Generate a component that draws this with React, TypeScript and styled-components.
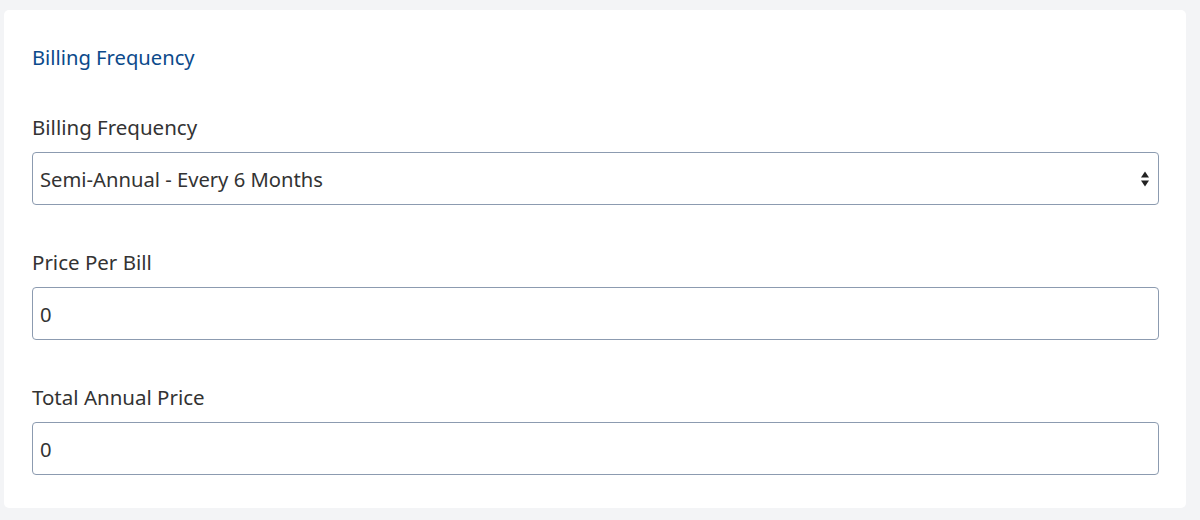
import React from "react";
import styled, { createGlobalStyle } from "styled-components";

const FONT = `"Noto Sans", "Open Sans", "Liberation Sans", sans-serif`;

const Global = createGlobalStyle`
  html, body { margin: 0; padding: 0; background: #f3f4f6; }
  body { font-family: ${FONT}; }
  * { box-sizing: border-box; }
`;

const Page = styled.div`
  width: 1200px;
  height: 520px;
  padding: 10px 14px 12px 4px;
  background: #f3f4f6;
`;

const Card = styled.section`
  background: #ffffff;
  border-radius: 5px;
  height: 100%;
  padding: 33px 27px 0 28px;
  display: flex;
  flex-direction: column;
`;

const Heading = styled.h2`
  margin: 0;
  font-size: 20.2px;
  font-weight: 400;
  color: #0b4a8b;
  line-height: 28px;
`;

const Field = styled.div<{ $first?: boolean }>`
  display: flex;
  flex-direction: column;
  gap: 12px;
  margin-top: ${(p) => (p.$first ? "43px" : "44px")};
`;

const Label = styled.label`
  font-size: 20.5px;
  line-height: 26px;
  color: #333;
`;

const boxCss = `
  width: 100%;
  height: 53px;
  border: 1px solid #8c9bb0;
  border-radius: 4px;
  background: #fff;
  font-family: ${FONT};
  font-size: 20.2px;
  color: #333;
  padding: 0 7px;
`;

const SelectWrap = styled.div`
  position: relative;
`;

const Select = styled.select`
  ${boxCss}
  appearance: none;
  outline: none;
`;

const Arrows = styled.svg`
  position: absolute;
  right: 10px;
  top: 50%;
  transform: translateY(-50%);
  pointer-events: none;
`;

const Input = styled.input`
  ${boxCss}
  outline: none;
`;

export default function App() {
  return (
    <Page>
      <Global />
      <Card>
        <Heading>Billing Frequency</Heading>
        <Field $first>
          <Label>Billing Frequency</Label>
          <SelectWrap>
            <Select defaultValue="semi">
              <option value="monthly">Monthly</option>
              <option value="semi">Semi-Annual - Every 6 Months</option>
              <option value="annual">Annual</option>
            </Select>
            <Arrows width="8" height="16" viewBox="0 0 8 16">
              <path d="M4 0.5 L8 6.5 H0 Z" fill="#222" />
              <path d="M0 9.5 H8 L4 15.5 Z" fill="#222" />
            </Arrows>
          </SelectWrap>
        </Field>
        <Field>
          <Label>Price Per Bill</Label>
          <Input defaultValue="0" />
        </Field>
        <Field>
          <Label>Total Annual Price</Label>
          <Input defaultValue="0" />
        </Field>
      </Card>
    </Page>
  );
}
